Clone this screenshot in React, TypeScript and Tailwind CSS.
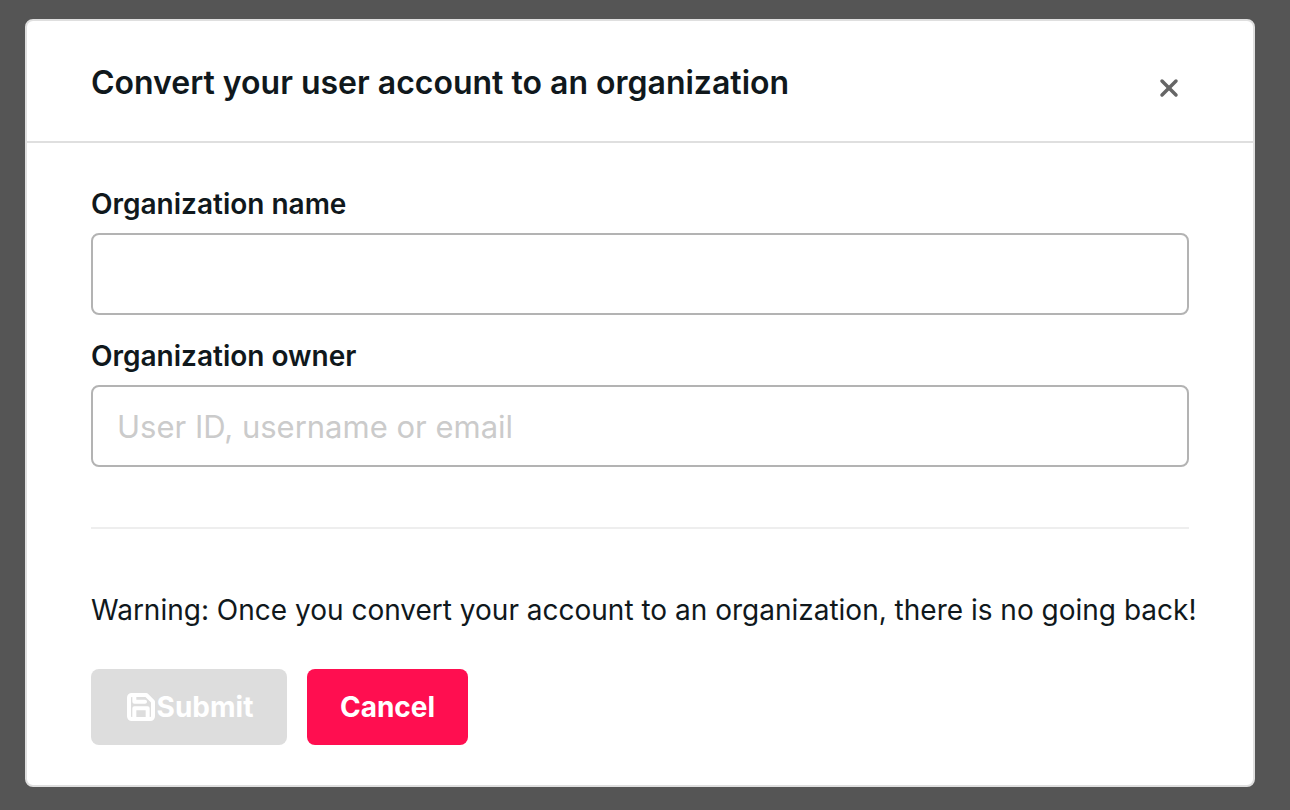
import { FiSave, FiX } from "react-icons/fi";

const labelClass = "mb-[9px] block text-[28px] leading-10 font-semibold";
const inputClass =
  "block h-[82px] w-full rounded-lg border-2 border-[#b3b3b3] bg-white px-6 text-[31px] text-[#10181c] placeholder:text-[#cbcbcb] placeholder:opacity-100 focus:outline-none";

export default function App() {
  return (
    <div className="min-h-screen bg-[#555555] pt-[19px] pr-[35px] pb-[23px] pl-[25px] font-['Inter',sans-serif] text-[#10181c]">
      <section role="dialog" aria-labelledby="dialog-title" className="rounded-lg border-2 border-[#dfdfdf] bg-white">
        <header className="flex items-start justify-between border-b-2 border-[#dfdfdf] px-16 pt-[42px] pb-[33px]">
          <h1 id="dialog-title" className="text-[32px] leading-10 font-semibold">
            Convert your user account to an organization
          </h1>
          <button type="button" aria-label="Close" className="mt-[5px] p-1.5 text-[#666666]">
            <FiX className="size-7" strokeWidth={3} />
          </button>
        </header>
        <form className="px-16 pt-[41px] pb-10">
          <div className="mb-[21px]">
            <label htmlFor="org-name" className={labelClass}>
              Organization name
            </label>
            <input id="org-name" type="text" className={inputClass} />
          </div>
          <div>
            <label htmlFor="org-owner" className={labelClass}>
              Organization owner
            </label>
            <input id="org-owner" type="text" placeholder="User ID, username or email" className={inputClass} />
          </div>
          <hr className="my-[60px] border-t-2 border-[#eeeeee]" />
          <p className="mb-[38px] text-[28px] leading-[42px] whitespace-nowrap">
            Warning: Once you convert your account to an organization, there is no going back!
          </p>
          <div className="flex gap-5">
            <button type="submit" disabled className="flex h-[76px] w-[196px] items-center justify-center rounded-lg bg-[#dddddd] text-[28px] font-bold text-white">
              <FiSave className="size-8 shrink-0" strokeWidth={3} />
              Submit
            </button>
            <button type="button" className="h-[76px] w-[161px] rounded-lg bg-[#ff0e50] text-[28px] font-bold text-white">
              Cancel
            </button>
          </div>
        </form>
      </section>
    </div>
  );
}
